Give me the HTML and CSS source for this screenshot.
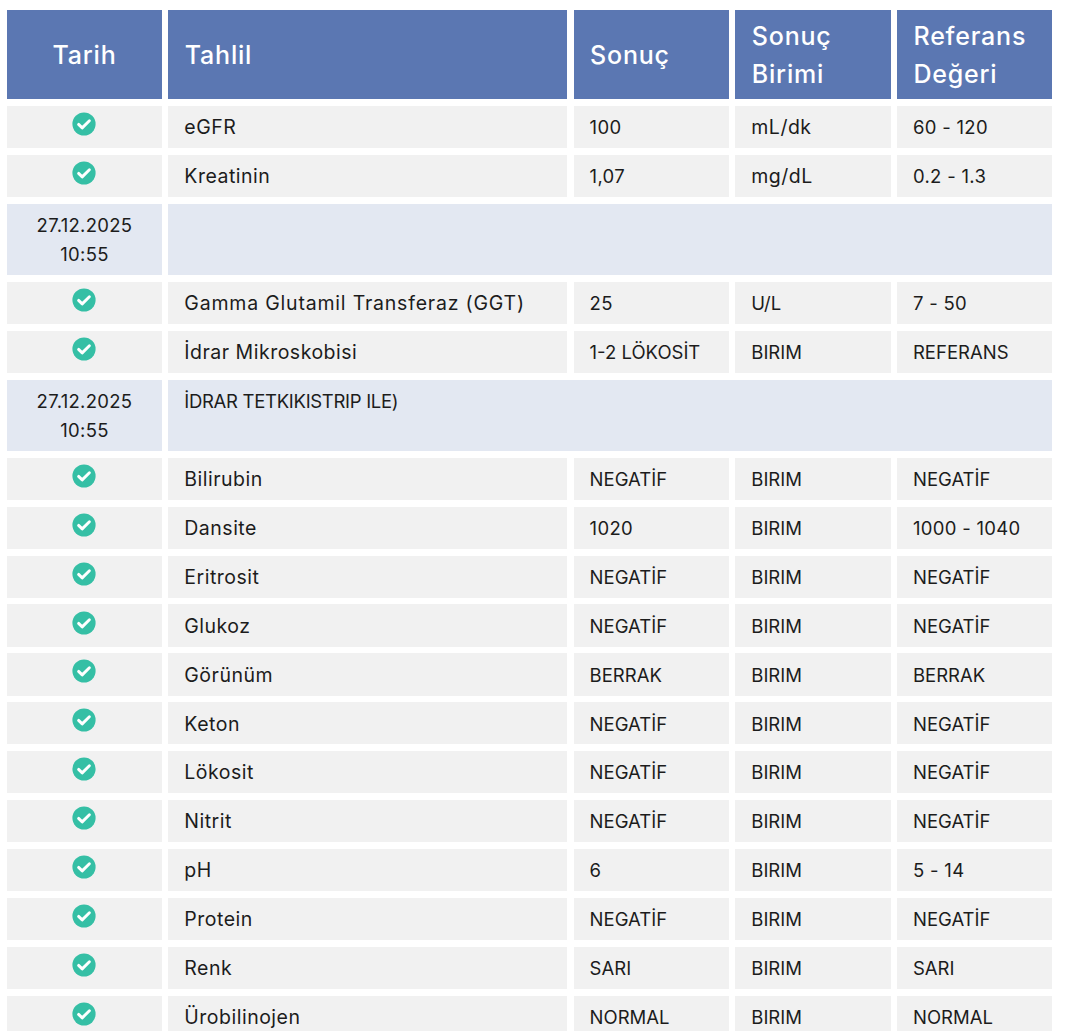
FILE: index.html
```html
<!DOCTYPE html>
<html lang="tr">
<head>
<meta charset="utf-8">
<title>Tahlil Sonuçları</title>
<link rel="stylesheet" href="styles.css">
</head>
<body>
<svg class="defs" width="0" height="0" aria-hidden="true"><symbol id="ok" viewBox="0 0 24 24"><circle cx="12" cy="12" r="11.6" fill="#35bfa5"/><path d="M6.6 12.4l3.6 3.5 7.2-7.2" fill="none" stroke="#fff" stroke-width="2.9" stroke-linecap="round" stroke-linejoin="round"/></symbol></svg>
<main class="results">
  <div class="cell head center">Tarih</div><div class="cell head">Tahlil</div><div class="cell head">Sonuç</div><div class="cell head">Sonuç<br>Birimi</div><div class="cell head">Referans<br>Değeri</div>

  <div class="cell status"><svg class="ok"><use href="#ok"/></svg></div><div class="cell name">eGFR</div><div class="cell num">100</div><div class="cell name">mL/dk</div><div class="cell num">60 - 120</div>
  <div class="cell status"><svg class="ok"><use href="#ok"/></svg></div><div class="cell name">Kreatinin</div><div class="cell num">1,07</div><div class="cell name">mg/dL</div><div class="cell num">0.2 - 1.3</div>

  <div class="cell band date">27.12.2025<br>10:55</div><div class="cell band wide"></div>

  <div class="cell status"><svg class="ok"><use href="#ok"/></svg></div><div class="cell name long">Gamma Glutamil Transferaz (GGT)</div><div class="cell num">25</div><div class="cell">U/L</div><div class="cell num">7 - 50</div>
  <div class="cell status"><svg class="ok"><use href="#ok"/></svg></div><div class="cell name">İdrar Mikroskobisi</div><div class="cell">1-2 LÖKOSİT</div><div class="cell">BIRIM</div><div class="cell">REFERANS</div>

  <div class="cell band date">27.12.2025<br>10:55</div><div class="cell band wide title">İDRAR TETKIKISTRIP ILE)</div>

  <div class="cell status"><svg class="ok"><use href="#ok"/></svg></div><div class="cell name">Bilirubin</div><div class="cell">NEGATİF</div><div class="cell">BIRIM</div><div class="cell">NEGATİF</div>
  <div class="cell status"><svg class="ok"><use href="#ok"/></svg></div><div class="cell name">Dansite</div><div class="cell num">1020</div><div class="cell">BIRIM</div><div class="cell num">1000 - 1040</div>
  <div class="cell status"><svg class="ok"><use href="#ok"/></svg></div><div class="cell name">Eritrosit</div><div class="cell">NEGATİF</div><div class="cell">BIRIM</div><div class="cell">NEGATİF</div>
  <div class="cell status"><svg class="ok"><use href="#ok"/></svg></div><div class="cell name">Glukoz</div><div class="cell">NEGATİF</div><div class="cell">BIRIM</div><div class="cell">NEGATİF</div>
  <div class="cell status"><svg class="ok"><use href="#ok"/></svg></div><div class="cell name">Görünüm</div><div class="cell">BERRAK</div><div class="cell">BIRIM</div><div class="cell">BERRAK</div>
  <div class="cell status"><svg class="ok"><use href="#ok"/></svg></div><div class="cell name">Keton</div><div class="cell">NEGATİF</div><div class="cell">BIRIM</div><div class="cell">NEGATİF</div>
  <div class="cell status"><svg class="ok"><use href="#ok"/></svg></div><div class="cell name">Lökosit</div><div class="cell">NEGATİF</div><div class="cell">BIRIM</div><div class="cell">NEGATİF</div>
  <div class="cell status"><svg class="ok"><use href="#ok"/></svg></div><div class="cell name">Nitrit</div><div class="cell">NEGATİF</div><div class="cell">BIRIM</div><div class="cell">NEGATİF</div>
  <div class="cell status"><svg class="ok"><use href="#ok"/></svg></div><div class="cell name">pH</div><div class="cell num">6</div><div class="cell">BIRIM</div><div class="cell num">5 - 14</div>
  <div class="cell status"><svg class="ok"><use href="#ok"/></svg></div><div class="cell name">Protein</div><div class="cell">NEGATİF</div><div class="cell">BIRIM</div><div class="cell">NEGATİF</div>
  <div class="cell status"><svg class="ok"><use href="#ok"/></svg></div><div class="cell name">Renk</div><div class="cell">SARI</div><div class="cell">BIRIM</div><div class="cell">SARI</div>
  <div class="cell status"><svg class="ok"><use href="#ok"/></svg></div><div class="cell name">Ürobilinojen</div><div class="cell">NORMAL</div><div class="cell">BIRIM</div><div class="cell">NORMAL</div>
</main>
</body>
</html>
```

FILE: styles.css
```css
html, body {
  margin: 0;
  height: 1031px;
  overflow: hidden;
  background: #fff;
}
.defs { display: block; }
.results {
  display: grid;
  grid-template-columns: 155px 399px 155.4px 155.4px 155.4px;
  gap: 6.6px 6.3px;
  padding: 10.4px 7px 0;
  font-family: Inter, "Noto Sans", sans-serif;
  font-size: 18.5px;
  line-height: 29px;
  color: #1c1c1c;
}
.cell {
  background: #f1f1f1;
  padding: 7.4px 16px 5.9px;
  height: 42.3px;
  box-sizing: border-box;
}
.name {
  font-size: 19.5px;
  letter-spacing: 0.5px;
}
.long { letter-spacing: 0.8px; }
.num { letter-spacing: 0.3px; }
.head {
  background: #5b77b2;
  color: #fff;
  font-size: 25px;
  font-weight: 500;
  line-height: 38px;
  letter-spacing: 0.8px;
  height: 89px;
  padding: 6.5px 16.5px;
  display: flex;
  align-items: center;
}
.center { justify-content: center; }
.status {
  display: flex;
  justify-content: center;
  padding: 6.1px 1px 0 0;
}
.ok { width: 24px; height: 24px; }
.band { background: #e3e8f2; height: 71.5px; }
.date { text-align: center; padding: 7px 0 0; letter-spacing: 0.3px; }
.wide { grid-column: 2 / 6; }
.title { letter-spacing: -0.3px; padding-top: 7px; }
```
